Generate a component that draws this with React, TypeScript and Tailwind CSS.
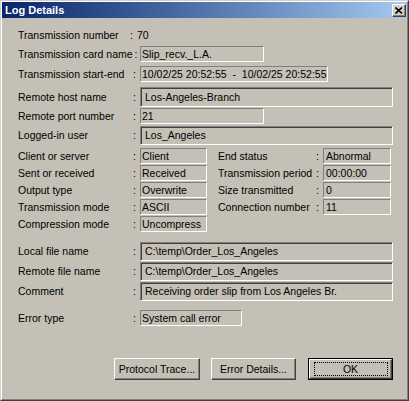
import { ReactNode } from 'react'

const thin =
  'flex items-center border border-t-[#808080] border-l-[#808080] border-b-white border-r-white pl-[1px] whitespace-pre overflow-hidden'
const thick =
  'flex items-center border border-t-[#808080] border-l-[#808080] border-b-white border-r-white shadow-[inset_1px_1px_0_#404040] pl-[4px] whitespace-pre overflow-hidden'

function Label({ children, w = 'w-[115px]' }: { children: ReactNode; w?: string }) {
  return <span className={`${w} shrink-0 whitespace-nowrap`}>{children}</span>
}

function Colon() {
  return <span className="w-[7px] shrink-0">:</span>
}

function Row({ label, value, box, mt, h }: { label: string; value: string; box: string; mt: string; h: string }) {
  return (
    <div className={`flex items-center ${mt} ${h}`}>
      <Label>{label}</Label>
      <Colon />
      <div className={`${box} h-full`}>{value}</div>
    </div>
  )
}

function Pair({ l, lv, r, rv }: { l: string; lv: string; r?: string; rv?: string }) {
  return (
    <div className="flex h-[16px] items-center">
      <Label>{l}</Label>
      <Colon />
      <div className={`${thin} h-full w-[67px]`}>{lv}</div>
      {r && (
        <>
          <span className="ml-[11px] w-[98px] shrink-0 whitespace-nowrap">{r}</span>
          <Colon />
          <div className={`${thin} h-full w-[68px] pl-[2px]`}>{rv}</div>
        </>
      )}
    </div>
  )
}

function Btn({ children, def, w }: { children: ReactNode; def?: boolean; w: string }) {
  if (def) {
    return (
      <div className={`${w} h-[22px] border border-black`}>
        <div className="flex h-full items-center justify-center border border-t-white border-l-white border-b-[#404040] border-r-[#404040] shadow-[inset_-1px_-1px_0_#808080]">
          <div className="flex h-[14px] w-[74px] items-center justify-center border border-dotted border-black">{children}</div>
        </div>
      </div>
    )
  }
  return (
    <div
      className={`${w} flex h-[22px] items-center justify-center border border-t-white border-l-white border-b-[#404040] border-r-[#404040] shadow-[inset_-1px_-1px_0_#808080]`}
    >
      {children}
    </div>
  )
}

export default function App() {
  return (
    <div
      className="h-[401px] w-[409px] border border-t-[#d4d0c8] border-l-[#d4d0c8] border-b-[#404040] border-r-[#404040] bg-[#c4c0b5] text-[10.5px] leading-none text-black"
      style={{ fontFamily: '"Liberation Sans", Arial, sans-serif' }}
    >
      <div className="flex h-full flex-col border border-t-white border-l-white border-b-[#808080] border-r-[#808080]">
        <div className="flex h-[16px] items-center bg-gradient-to-r from-[#0a246a] to-[#a6caf0] pl-[3px] pr-[1px]">
          <span className="flex-1 text-[11px] font-bold text-white">Log Details</span>
          <div className="flex h-[13px] w-[14px] items-center justify-center border border-t-white border-l-white border-b-[#404040] border-r-[#404040] bg-[#d4d0c8] shadow-[inset_-1px_-1px_0_#808080]">
            <svg width="8" height="7" viewBox="0 0 8 7">
              <path d="M0.5 0.5 L7 6.5 M7 0.5 L0.5 6.5" stroke="#000" strokeWidth="1.6" />
            </svg>
          </div>
        </div>

        <div className="flex flex-col pl-[16px]">
          <div className="mt-[9px] flex h-[16px] items-center">
            <Label w="w-[112px]">Transmission number</Label>
            <span className="w-[7px] shrink-0">:</span>
            <span>70</span>
          </div>
          <div className="mt-[3px] flex h-[16px] items-center">
            <div className="flex w-[122px] shrink-0 items-center">
              <span className="whitespace-nowrap">Transmission card name</span>
              <span className="ml-[2px]">:</span>
            </div>
            <div className={`${thin} h-full w-[124px]`}>Slip_recv._L.A.</div>
          </div>
          <Row label="Transmission start-end" value="10/02/25 20:52:55  -  10/02/25 20:52:55" box={`${thin} w-[188px]`} mt="mt-[4px]" h="h-[16px]" />
          <Row label="Remote host name" value="Los-Angeles-Branch" box={`${thick} w-[253px]`} mt="mt-[5px]" h="h-[20px]" />
          <Row label="Remote port number" value="21" box={`${thin} w-[124px]`} mt="mt-[1px]" h="h-[16px]" />
          <Row label="Logged-in user" value="Los_Angeles" box={`${thick} w-[253px]`} mt="mt-[2px]" h="h-[19px]" />

          <div className="mt-[3px] flex flex-col gap-[1px]">
            <Pair l="Client or server" lv="Client" r="End status" rv="Abnormal" />
            <Pair l="Sent or received" lv="Received" r="Transmission period" rv="00:00:00" />
            <Pair l="Output type" lv="Overwrite" r="Size transmitted" rv="0" />
            <Pair l="Transmission mode" lv="ASCII" r="Connection number" rv="11" />
            <Pair l="Compression mode" lv="Uncompress" />
          </div>

          <Row label="Local file name" value="C:\temp\Order_Los_Angeles" box={`${thick} w-[253px]`} mt="mt-[10px]" h="h-[19px]" />
          <Row label="Remote file name" value="C:\temp\Order_Los_Angeles" box={`${thick} w-[253px]`} mt="mt-[1px]" h="h-[19px]" />
          <Row label="Comment" value="Receiving order slip from Los Angeles Br." box={`${thick} w-[253px]`} mt="mt-[1px]" h="h-[19px]" />
          <Row label="Error type" value="System call error" box={`${thin} w-[102px]`} mt="mt-[9px]" h="h-[16px]" />
        </div>

        <div className="mt-[32px] flex justify-end pr-[14px]">
          <Btn w="w-[86px]">Protocol Trace...</Btn>
          <div className="w-[11px]" />
          <Btn w="w-[85px]">Error Details...</Btn>
          <div className="w-[12px]" />
          <Btn w="w-[85px]" def>
            OK
          </Btn>
        </div>
      </div>
    </div>
  )
}
